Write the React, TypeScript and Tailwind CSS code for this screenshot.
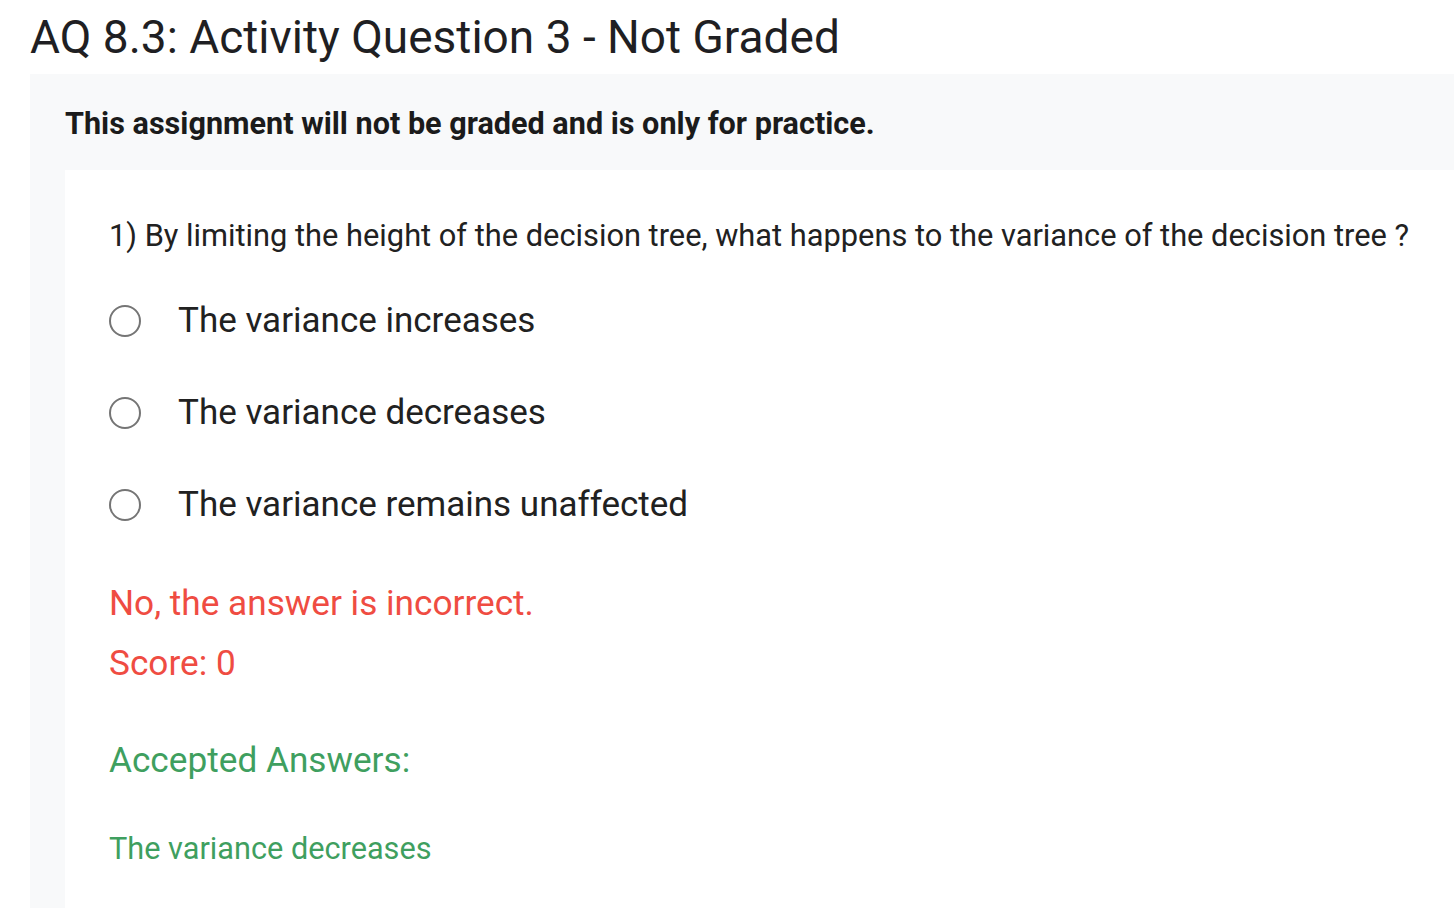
import React from 'react';

const options = [
  'The variance increases',
  'The variance decreases',
  'The variance remains unaffected',
];

const Radio: React.FC = () => (
  <span className="inline-block w-[32px] h-[32px] rounded-full border-2 border-[#757575] bg-white shrink-0" />
);

export default function App() {
  return (
    <div
      className="min-h-screen bg-white text-[#202124] overflow-hidden"
      style={{ fontFamily: 'Roboto, "Liberation Sans", sans-serif' }}
    >
      <div className="pl-[30px]">
        <h1 className="text-[46px] leading-[74px] font-normal text-[#1f1f23]">
          AQ 8.3: Activity Question 3 - Not Graded
        </h1>
        <div className="bg-[#f8f9fa] pl-[35px] min-h-[834px]">
          <p className="text-[30.6px] font-bold leading-[96px] pt-[2px] h-[96px] text-[#1b1b1b] whitespace-nowrap">
            This assignment will not be graded and is only for practice.
          </p>
          <div className="bg-white pl-[44px] pt-[44px] pb-[40px] min-h-[738px]">
            <p className="text-[30.8px] leading-[44px] text-[#212121] whitespace-nowrap">
              1) By limiting the height of the decision tree, what happens to the variance of the decision tree ?
            </p>
            <div className="mt-[43px] flex flex-col gap-[52px]">
              {options.map((o) => (
                <label key={o} className="flex items-center gap-[37px] h-[40px]">
                  <Radio />
                  <span className="text-[35px] text-[#212121]">{o}</span>
                </label>
              ))}
            </div>
            <p className="mt-[56px] text-[35.2px] leading-[44px] text-[#ef4c42]">No, the answer is incorrect.</p>
            <p className="mt-[16px] text-[35.2px] leading-[44px] text-[#ef4c42]">Score: 0</p>
            <p className="mt-[53px] text-[35.2px] leading-[44px] text-[#3f9f5f]">Accepted Answers:</p>
            <p className="mt-[45px] text-[30.7px] leading-[44px] text-[#3f9f5f]">The variance decreases</p>
          </div>
        </div>
      </div>
    </div>
  );
}
